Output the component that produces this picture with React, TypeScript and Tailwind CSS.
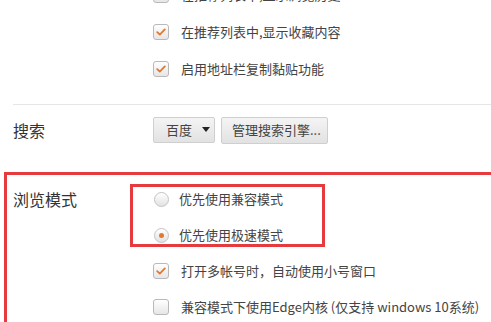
import React from 'react';

const FONT = { fontFamily: '"Noto Sans CJK SC", "Noto Sans", sans-serif' };

const CheckBox: React.FC<{ checked?: boolean }> = ({ checked }) => (
  <span className="w-[16px] h-[16px] shrink-0 rounded-[3px] border border-[#b9b9b9] bg-gradient-to-b from-white to-[#e6e6e6] flex items-center justify-center">
    {checked && (
      <svg width="10" height="8" viewBox="0 0 10 8">
        <path d="M1.2 4.2 L3.8 6.6 L8.8 1.4" fill="none" stroke="#e4782f" strokeWidth="1.8" strokeLinecap="round" strokeLinejoin="round" />
      </svg>
    )}
  </span>
);

const Radio: React.FC<{ checked?: boolean }> = ({ checked }) => (
  <span className="w-[15px] h-[15px] shrink-0 rounded-full border border-[#c4c4c4] bg-gradient-to-b from-white to-[#e2e2e2] flex items-center justify-center">
    {checked && <span className="w-[5px] h-[5px] rounded-full bg-[#e4782f]" />}
  </span>
);

const CheckRow: React.FC<{ checked?: boolean; label: string }> = ({ checked, label }) => (
  <div className="h-[37px] flex items-center gap-[12px]">
    <CheckBox checked={checked} />
    <span className="text-[13px] text-[#444] whitespace-nowrap">{label}</span>
  </div>
);

export default function App() {
  return (
    <div className="w-[491px] h-[322px] overflow-hidden bg-white" style={FONT}>
      {/* 推荐列表 */}
      <div className="pl-[153px] -mt-[24px]">
        <CheckRow checked label="在推荐列表中,显示浏览历史" />
        <CheckRow checked label="在推荐列表中,显示收藏内容" />
        <CheckRow checked label="启用地址栏复制黏贴功能" />
      </div>

      <div className="ml-[13px] mt-[17px] h-px bg-[#e6e6e6]" />

      {/* 搜索 */}
      <div className="flex items-center mt-[12px] h-[26px]">
        <span className="w-[153px] pl-[13px] text-[16px] text-[#333]">搜索</span>
        <div className="flex gap-[6px]">
          <div className="w-[62px] h-[26px] flex items-center pl-[12px] gap-[10px] border border-[#cfcfcf] rounded-[2px] bg-gradient-to-b from-[#f4f4f4] to-[#e2e2e2] text-[13px] text-[#444]">
            <span>百度</span>
            <svg width="8" height="5" viewBox="0 0 8 5"><path d="M0 0 H8 L4 5 Z" fill="#222" /></svg>
          </div>
          <div className="w-[107px] h-[27px] flex items-center pl-[10px] border border-[#cfcfcf] rounded-[2px] bg-gradient-to-b from-[#f4f4f4] to-[#e2e2e2] text-[13px] text-[#444]">
            管理搜索引擎...
          </div>
        </div>
      </div>

      {/* 浏览模式 */}
      <div className="ml-[4px] mt-[29px] w-[500px] h-[200px] border-[3px] border-[#e63b3e] flex">
        <div className="w-[123px] pl-[6px] pt-[12px] text-[16px] leading-[24px] text-[#333]">浏览模式</div>
        <div className="flex flex-col">
          <div className="mt-[9px] w-[195px] h-[63px] border-[3px] border-[#e63b3e] pl-[21px] pt-[4px] flex flex-col gap-[20px]">
            <div className="h-[16px] flex items-center gap-[10px]">
              <Radio />
              <span className="text-[13px] text-[#444] whitespace-nowrap">优先使用兼容模式</span>
            </div>
            <div className="h-[16px] flex items-center gap-[10px]">
              <Radio checked />
              <span className="text-[13px] text-[#444] whitespace-nowrap">优先使用极速模式</span>
            </div>
          </div>
          <div className="mt-[6px] pl-[23px]">
            <div className="h-[36px] flex items-center gap-[12px]">
              <CheckBox checked />
              <span className="text-[13px] text-[#444] whitespace-nowrap">打开多帐号时，自动使用小号窗口</span>
            </div>
            <div className="h-[36px] flex items-center gap-[12px]">
              <CheckBox />
              <span className="text-[13px] text-[#444] whitespace-nowrap">兼容模式下使用Edge内核 (仅支持 windows 10系统)</span>
            </div>
          </div>
        </div>
      </div>
    </div>
  );
}
